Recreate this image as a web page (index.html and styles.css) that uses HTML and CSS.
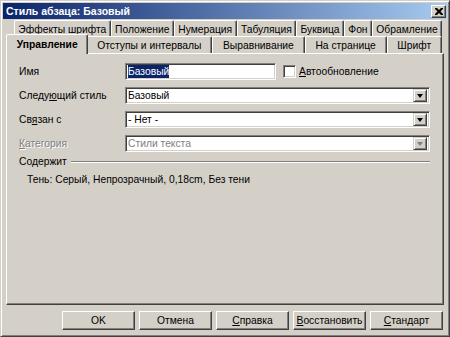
FILE: index.html
```html
<!DOCTYPE html>
<html lang="ru">
<head>
    <meta charset="UTF-8">
    <title>Стиль абзаца: Базовый</title>
    <link rel="stylesheet" href="styles.css">
</head>
<body>
    <div class="window">
        <div class="titlebar">
            <span class="title">Стиль абзаца: Базовый</span>
            <div class="close">
                <svg width="8" height="7" viewBox="0 0 8 7">
                    <path d="M0 0h2l2 2 2-2h2v1l-2.5 2.5L8 6v1H6L4 5 2 7H0V6l2.5-2.5L0 1z" fill="#000"/>
                </svg>
            </div>
        </div>
        <div class="tabs">
            <div class="tabrow back">
                <div class="tab">Эффекты шрифта</div>
                <div class="tab">Положение</div>
                <div class="tab">Нумерация</div>
                <div class="tab">Табуляция</div>
                <div class="tab">Буквица</div>
                <div class="tab">Фон</div>
                <div class="tab">Обрамление</div>
            </div>
            <div class="tabrow front">
                <div class="tab active">Управление</div>
                <div class="tab">Отступы и интервалы</div>
                <div class="tab">Выравнивание</div>
                <div class="tab">На странице</div>
                <div class="tab">Шрифт</div>
            </div>
        </div>
        <div class="panel">
            <div class="form">
                <div class="row">
                    <span class="label">Имя</span>
                    <div class="field name"><span class="selected">Базовый</span></div>
                    <span class="checkbox"></span>
                    <span class="checklabel"><u>А</u>втообновление</span>
                </div>
                <div class="row">
                    <span class="label">Следу<u>ю</u>щий стиль</span>
                    <div class="field combo">
                        <span class="value">Базовый</span>
                        <span class="drop"><i class="arrow"></i></span>
                    </div>
                </div>
                <div class="row">
                    <span class="label">Св<u>я</u>зан с</span>
                    <div class="field combo">
                        <span class="value">- Нет -</span>
                        <span class="drop"><i class="arrow"></i></span>
                    </div>
                </div>
                <div class="row disabled">
                    <span class="label"><u>К</u>атегория</span>
                    <div class="field combo">
                        <span class="value">Стили текста</span>
                        <span class="drop"><i class="arrow"></i></span>
                    </div>
                </div>
            </div>
            <div class="group">
                <div class="grouphead">
                    <span>Содержит</span>
                    <span class="rule"></span>
                </div>
                <p class="contains">Тень: Серый, Непрозрачный, 0,18cm, Без тени</p>
            </div>
        </div>
        <div class="buttons">
            <div class="btn">OK</div>
            <div class="btn">Отмена</div>
            <div class="btn"><u>С</u>правка</div>
            <div class="btn"><u>В</u>осстановить</div>
            <div class="btn"><u>С</u>тандарт</div>
        </div>
    </div>
</body>
</html>
```
FILE: styles.css
```css
* {
    margin: 0;
    padding: 0;
    box-sizing: border-box;
    font-family: 'Liberation Sans', Arial, sans-serif;
    font-size: 10.3px;
}
body {
    width: 450px;
    height: 337px;
    overflow: hidden;
    background: #d4d0c8;
}
u {
    text-decoration: underline;
}
.window {
    width: 450px;
    height: 337px;
    background: #d4d0c8;
    border: 1px solid;
    border-color: #d4d0c8 #404040 #404040 #d4d0c8;
    box-shadow: inset 1px 1px #fff, inset -1px -1px #808080;
    padding: 2px;
    display: flex;
    flex-direction: column;
}
.titlebar {
    height: 16px;
    background: linear-gradient(to right, #0a246a, #a6caf0);
    display: flex;
    align-items: center;
    justify-content: space-between;
    padding: 0 1px 0 3px;
}
.title {
    color: #fff;
    font-weight: bold;
    font-size: 10.5px;
}
.close {
    width: 15px;
    height: 13px;
    background: #d4d0c8;
    border: 1px solid;
    border-color: #fff #404040 #404040 #fff;
    box-shadow: inset -1px -1px #808080;
    display: flex;
    align-items: center;
    justify-content: center;
}
.tabs {
    margin-top: 1px;
    display: flex;
    flex-direction: column;
}
.tabrow {
    display: flex;
    height: 17px;
}
.tabrow.back {
    margin: 0 5px 0 11px;
}
.tabrow.back .tab {
    padding: 0 3px;
}
.tabrow.front {
    margin: -1px 5px 0 5px;
    position: relative;
    z-index: 2;
}
.tab {
    flex: 1 1 auto;
    min-width: 0;
    height: 17px;
    padding: 0 5px;
    background: #d4d0c8;
    border-top: 1px solid #fff;
    border-left: 1px solid #fff;
    border-right: 1px solid #404040;
    border-top-left-radius: 2px;
    border-top-right-radius: 2px;
    box-shadow: inset -1px 0 #808080;
    display: flex;
    align-items: center;
    justify-content: center;
    white-space: nowrap;
    overflow: hidden;
    color: #000;
}
.tab.active {
    font-weight: bold;
    height: 20px;
    margin: -2px -2px -1px -2px;
    position: relative;
    z-index: 3;
    padding-bottom: 1px;
}
.panel {
    margin: 0 3px;
    height: 252px;
    border: 1px solid;
    border-color: #fff #404040 #404040 #fff;
    box-shadow: inset -1px -1px #808080;
    padding: 9px 13px 0 12px;
    position: relative;
    z-index: 1;
}
.form {
    display: flex;
    flex-direction: column;
    gap: 7px;
}
.row {
    display: flex;
    align-items: center;
    height: 17px;
}
.label {
    width: 106px;
    flex: none;
}
.field {
    height: 17px;
    background: #fff;
    border: 1px solid;
    border-color: #808080 #fff #fff #808080;
    box-shadow: inset 1px 1px #404040, inset -1px -1px #d4d0c8;
    padding: 1px 2px;
    display: flex;
    align-items: center;
}
.field.name {
    width: 151px;
}
.selected {
    background: #0a246a;
    color: #fff;
    line-height: 13px;
}
.checkbox {
    width: 13px;
    height: 13px;
    margin-left: 7px;
    background: #fff;
    border: 1px solid;
    border-color: #808080 #fff #fff #808080;
    box-shadow: inset 1px 1px #404040, inset -1px -1px #d4d0c8;
}
.checklabel {
    margin-left: 3px;
}
.combo {
    flex: 1;
    justify-content: space-between;
    padding-right: 2px;
}
.drop {
    width: 14px;
    height: 13px;
    background: #d4d0c8;
    border: 1px solid;
    border-color: #d4d0c8 #404040 #404040 #d4d0c8;
    box-shadow: inset 1px 1px #fff, inset -1px -1px #808080;
    display: flex;
    align-items: center;
    justify-content: center;
}
.arrow {
    width: 0;
    height: 0;
    border-left: 3.5px solid transparent;
    border-right: 3.5px solid transparent;
    border-top: 4px solid #000;
}
.disabled .label,
.disabled .value {
    color: #808080;
}
.disabled .label {
    text-shadow: 1px 1px #fff;
}
.disabled .arrow {
    border-top-color: #808080;
}
.group {
    margin-top: 3px;
}
.grouphead {
    display: flex;
    align-items: center;
    height: 13px;
}
.rule {
    flex: 1;
    height: 2px;
    margin-left: 4px;
    border-top: 1px solid #808080;
    border-bottom: 1px solid #fff;
}
.contains {
    margin: 6px 0 0 8px;
}
.buttons {
    display: flex;
    justify-content: flex-end;
    gap: 4px;
    margin-top: 6px;
    padding-right: 4px;
}
.btn {
    width: 73px;
    height: 19px;
    background: #d4d0c8;
    border: 1px solid;
    border-color: #fff #404040 #404040 #fff;
    box-shadow: inset -1px -1px #808080;
    display: flex;
    align-items: center;
    justify-content: center;
}
```
